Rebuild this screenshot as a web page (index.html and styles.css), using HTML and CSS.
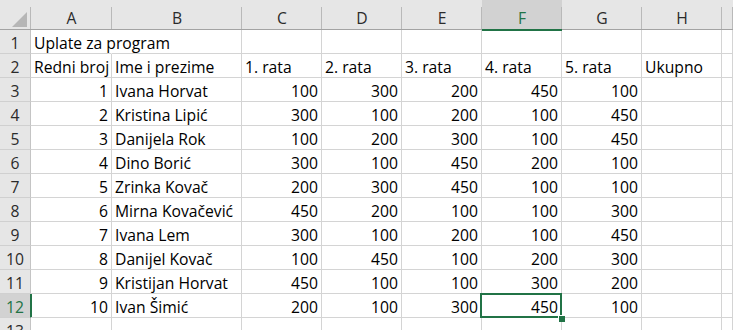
FILE: index.html
```html
<!DOCTYPE html>
<html lang="hr">
<head>
<meta charset="utf-8">
<title>Uplate za program</title>
<link rel="stylesheet" href="styles.css">
</head>
<body>
<div class="sheet">
  <div class="ch corner"><svg class="tri" width="15" height="15" viewBox="0 0 15 15"><polygon points="15,0 15,15 0,15" fill="#b6b6b6"/></svg></div>
  <div class="ch">A</div><div class="ch">B</div><div class="ch">C</div><div class="ch">D</div><div class="ch">E</div><div class="ch sel">F</div><div class="ch">G</div><div class="ch">H</div><div class="ch"></div>

  <div class="rh">1</div><div class="c t over">Uplate za program</div><div class="c"></div><div class="c"></div><div class="c"></div><div class="c"></div><div class="c"></div><div class="c"></div><div class="c"></div><div class="c"></div>

  <div class="rh">2</div><div class="c t">Redni broj</div><div class="c t">Ime i prezime</div><div class="c t">1. rata</div><div class="c t">2. rata</div><div class="c t">3. rata</div><div class="c t">4. rata</div><div class="c t">5. rata</div><div class="c t">Ukupno</div><div class="c"></div>

  <div class="rh">3</div><div class="c n">1</div><div class="c t">Ivana Horvat</div><div class="c n">100</div><div class="c n">300</div><div class="c n">200</div><div class="c n">450</div><div class="c n">100</div><div class="c"></div><div class="c"></div>

  <div class="rh">4</div><div class="c n">2</div><div class="c t">Kristina Lipić</div><div class="c n">300</div><div class="c n">100</div><div class="c n">200</div><div class="c n">100</div><div class="c n">450</div><div class="c"></div><div class="c"></div>

  <div class="rh">5</div><div class="c n">3</div><div class="c t">Danijela Rok</div><div class="c n">100</div><div class="c n">200</div><div class="c n">300</div><div class="c n">100</div><div class="c n">450</div><div class="c"></div><div class="c"></div>

  <div class="rh">6</div><div class="c n">4</div><div class="c t">Dino Borić</div><div class="c n">300</div><div class="c n">100</div><div class="c n">450</div><div class="c n">200</div><div class="c n">100</div><div class="c"></div><div class="c"></div>

  <div class="rh">7</div><div class="c n">5</div><div class="c t">Zrinka Kovač</div><div class="c n">200</div><div class="c n">300</div><div class="c n">450</div><div class="c n">100</div><div class="c n">100</div><div class="c"></div><div class="c"></div>

  <div class="rh">8</div><div class="c n">6</div><div class="c t">Mirna Kovačević</div><div class="c n">450</div><div class="c n">200</div><div class="c n">100</div><div class="c n">100</div><div class="c n">300</div><div class="c"></div><div class="c"></div>

  <div class="rh">9</div><div class="c n">7</div><div class="c t">Ivana Lem</div><div class="c n">300</div><div class="c n">100</div><div class="c n">200</div><div class="c n">100</div><div class="c n">450</div><div class="c"></div><div class="c"></div>

  <div class="rh">10</div><div class="c n">8</div><div class="c t">Danijel Kovač</div><div class="c n">100</div><div class="c n">450</div><div class="c n">100</div><div class="c n">200</div><div class="c n">300</div><div class="c"></div><div class="c"></div>

  <div class="rh">11</div><div class="c n">9</div><div class="c t">Kristijan Horvat</div><div class="c n">450</div><div class="c n">100</div><div class="c n">100</div><div class="c n">300</div><div class="c n">200</div><div class="c"></div><div class="c"></div>

  <div class="rh sel">12</div><div class="c n">10</div><div class="c t">Ivan Šimić</div><div class="c n">200</div><div class="c n">100</div><div class="c n">300</div><div class="c n active">450</div><div class="c n">100</div><div class="c"></div><div class="c"></div>

  <div class="rh">13</div><div class="c"></div><div class="c"></div><div class="c"></div><div class="c"></div><div class="c"></div><div class="c"></div><div class="c"></div><div class="c"></div><div class="c"></div>
</div>
</body>
</html>
```

FILE: styles.css
```css
html, body {
  margin: 0;
  padding: 0;
  background: #ffffff;
  overflow: hidden;
}

.sheet {
  display: grid;
  grid-template-columns: 31px 81px 130px 80px 80px 80px 80px 80px 80px 1fr;
  grid-template-rows: 30px repeat(13, 24px);
  width: 100%;
  font-family: "Open Sans", "Liberation Sans", sans-serif;
  font-size: 15.7px;
  color: #000000;
}

.ch {
  box-sizing: border-box;
  background-color: #e6e6e6;
  background-image: linear-gradient(#b9b9b9, #b9b9b9);
  background-size: 1px 22px;
  background-position: right bottom;
  background-repeat: no-repeat;
  border-bottom: 1px solid #a3a3a3;
  padding-top: 8px;
  line-height: 20px;
  text-align: center;
  color: #2b2b2b;
  position: relative;
}

.ch.sel {
  background-color: #d2d2d2;
  color: #217346;
  border-bottom-color: #217346;
  box-shadow: 0 1px 0 #217346;
}

.corner .tri {
  position: absolute;
  left: 12px;
  top: 12px;
}

.rh {
  box-sizing: border-box;
  background: #e6e6e6;
  border-right: 1px solid #c4c4c4;
  border-bottom: 1px solid #d0d0d0;
  padding-top: 3px;
  line-height: 20px;
  text-align: center;
  color: #2b2b2b;
}

.rh.sel {
  background: #d2d2d2;
  color: #217346;
  border-right-color: #217346;
  box-shadow: 1px 0 0 #217346;
}

.c {
  box-sizing: border-box;
  border-right: 1px solid #d4d4d4;
  border-bottom: 1px solid #d4d4d4;
  padding: 3px 3px 0 3px;
  line-height: 20px;
  white-space: nowrap;
  overflow: visible;
}

.c.t {
  text-align: left;
}

.c.n {
  text-align: right;
}

.c.over {
  border-right-color: #ffffff;
}

.c.active {
  position: relative;
}

.c.active::after {
  content: "";
  position: absolute;
  left: -2px;
  top: -1px;
  right: -1px;
  bottom: -1px;
  border: 2px solid #217346;
}

.c.active::before {
  content: "";
  position: absolute;
  left: 77px;
  top: 22px;
  width: 6px;
  height: 6px;
  background: #217346;
  box-shadow: -1px -1px 0 #ffffff;
  z-index: 1;
}
```
